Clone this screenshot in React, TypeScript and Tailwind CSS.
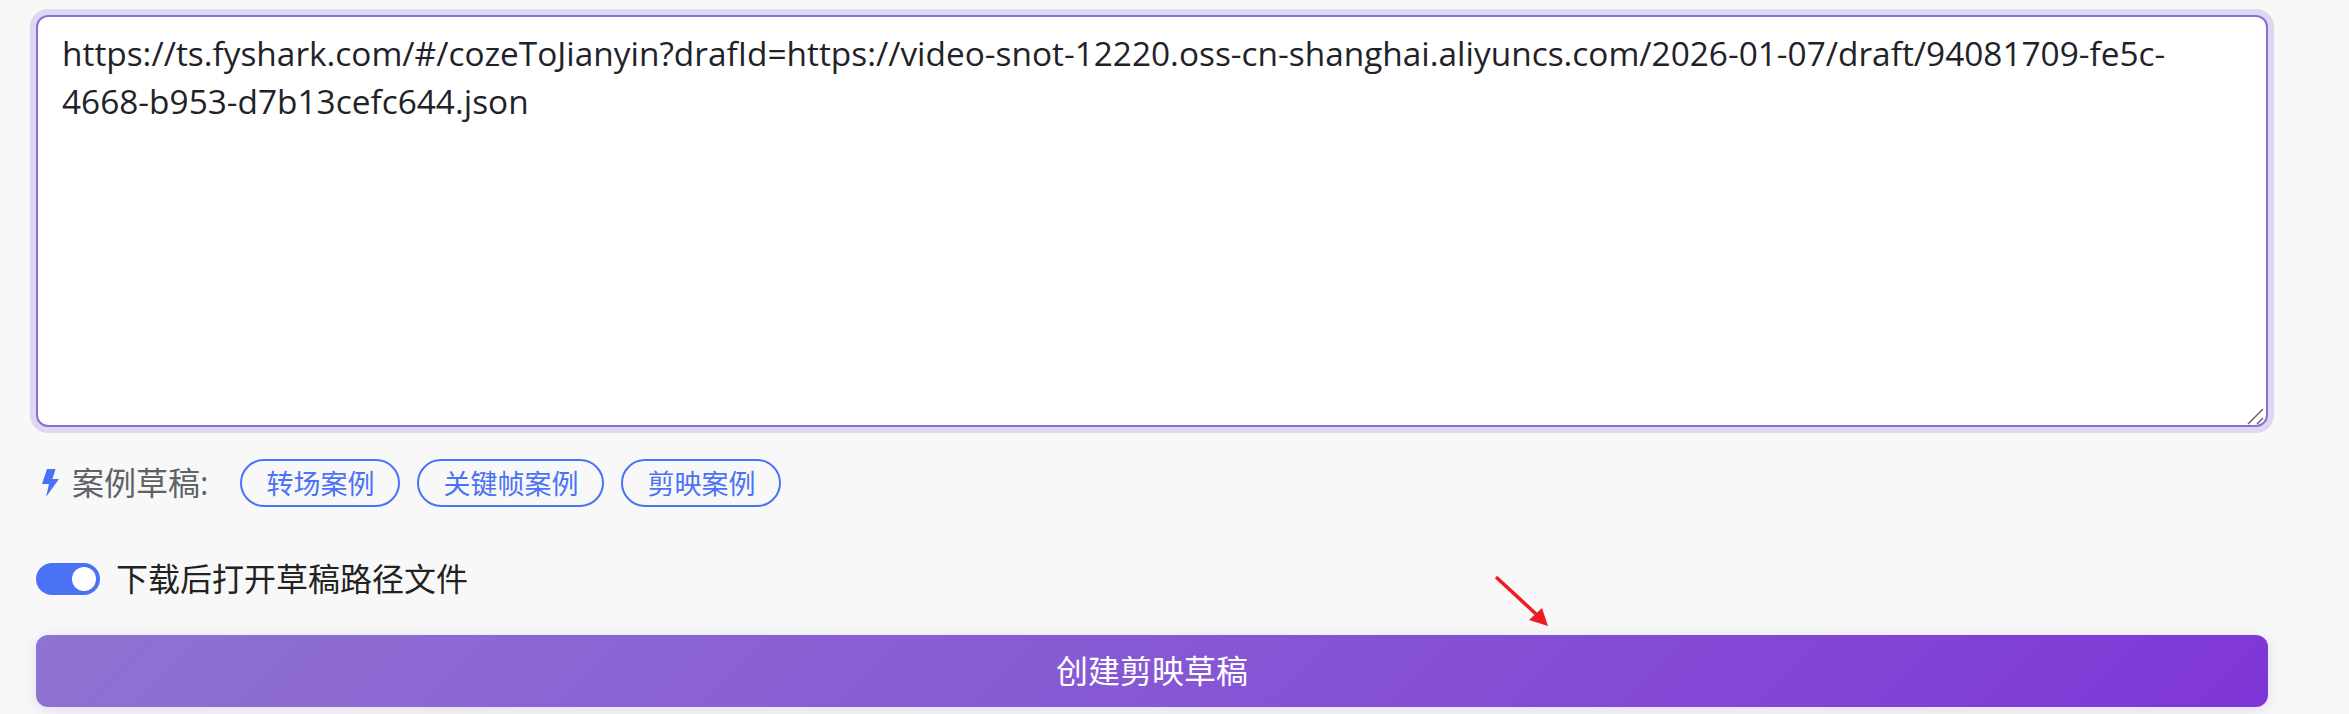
const url =
  "https://ts.fyshark.com/#/cozeToJianyin?drafId=https://video-snot-12220.oss-cn-shanghai.aliyuncs.com/2026-01-07/draft/94081709-fe5c-4668-b953-d7b13cefc644.json";

const samples = ["转场案例", "关键帧案例", "剪映案例"];

const cjk = "font-['Open_Sans','Noto_Sans_CJK_SC',sans-serif]";

function BoltIcon() {
  return (
    <svg width="17" height="28" viewBox="0 0 17 28" className="shrink-0">
      <path d="M5 0H13.5L10.5 10H17L4 28L7 15H0Z" fill="#4a72f5" />
    </svg>
  );
}

function ResizeGrip() {
  return (
    <svg width="18" height="18" viewBox="0 0 18 18" className="absolute bottom-[2px] right-[3px]">
      <path d="M1 17L16 2M10 17L16 11" stroke="#666" strokeWidth="1.5" />
    </svg>
  );
}

function Arrow() {
  return (
    <svg width="70" height="70" viewBox="0 0 70 70" className="absolute left-[1490px] top-[570px]">
      <path d="M6 7L46 44" stroke="#ee1c25" strokeWidth="3.5" />
      <path d="M58 56L52 38L39 50Z" fill="#ee1c25" />
    </svg>
  );
}

export default function App() {
  return (
    <div className={`relative h-[714px] w-full overflow-hidden bg-[#f8f8f8] pl-[36px] pr-[81px] pt-[15px] ${cjk}`}>
      <div className="relative">
        <textarea
          readOnly
          defaultValue={url}
          className="block h-[412px] w-full resize-none rounded-[12px] border-2 border-[#8b6fd6] bg-white px-[24px] py-[12px] text-[33.4px] leading-[48px] text-[#1f2329] shadow-[0_0_0_6px_#dfd6f0] outline-none"
        />
        <ResizeGrip />
      </div>
      <div className="mt-[32px] flex h-[48px] items-center pl-[6px]">
        <BoltIcon />
        <span className="ml-[13px] text-[32px] text-[#606266]">案例草稿:</span>
        <div className="ml-[32px] flex gap-[17px]">
          {samples.map((s) => (
            <button
              key={s}
              className="h-[48px] rounded-full border-2 border-[#4a72f5] px-[24px] text-[27px] leading-none text-[#4a72f5]"
            >
              {s}
            </button>
          ))}
        </div>
      </div>
      <div className="mt-[56px] flex h-[32px] items-center">
        <div className="flex h-[32px] w-[64px] items-center justify-end rounded-full bg-[#4a72f5] pr-[4px]">
          <div className="h-[24px] w-[24px] rounded-full bg-white" />
        </div>
        <span className="ml-[16px] text-[32px] text-[#222]">下载后打开草稿路径文件</span>
      </div>
      <button className="mt-[40px] flex h-[72px] w-full items-center justify-center rounded-[12px] bg-linear-135 from-[#8f72d1] to-[#7f35d6] text-[32px] text-white shadow-[0_3px_15px_rgba(100,60,200,0.15)]">
        创建剪映草稿
      </button>
      <Arrow />
    </div>
  );
}
